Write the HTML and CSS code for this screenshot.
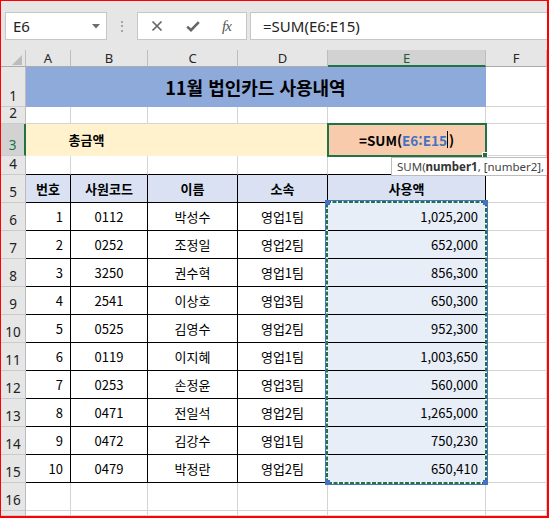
FILE: index.html
```html
<!DOCTYPE html>
<html lang="ko">
<head>
  <meta charset="UTF-8">
  <title>11월 법인카드 사용내역</title>
  <link rel="stylesheet" href="styles.css">
</head>
<body>
<div class="frame">
  <!-- 수식 입력줄 -->
  <div class="toolbar">
    <div class="namebox">
      <span>E6</span>
      <svg class="drop" width="8" height="5" viewBox="0 0 8 5"><polygon points="0,0 8,0 4,4.5" fill="#6b6b6b"/></svg>
    </div>
    <div class="grip"><i></i><i></i><i></i></div>
    <div class="fxbox">
      <svg width="12" height="12" viewBox="0 0 12 12"><path d="M1.5 1.5 L10.5 10.5 M10.5 1.5 L1.5 10.5" stroke="#666" stroke-width="1.7" fill="none"/></svg>
      <svg width="14" height="11" viewBox="0 0 14 11"><path d="M1.2 5.6 L5 9.2 L12.8 1.2" stroke="#666" stroke-width="2.6" fill="none"/></svg>
      <span class="fx">fx</span>
    </div>
    <div class="formula">=SUM(E6:E15)</div>
  </div>

  <!-- 시트 -->
  <div class="sheet">
    <div class="c ch corner"><svg width="10" height="10" viewBox="0 0 10 10"><polygon points="10,0 10,10 0,10" fill="#bcbcbc"/></svg></div>
    <div class="c ch">A</div>
    <div class="c ch">B</div>
    <div class="c ch">C</div>
    <div class="c ch">D</div>
    <div class="c ch sel">E</div>
    <div class="c ch">F</div>

    <div class="c rh">1</div>
    <div class="c title">11월 법인카드 사용내역</div>
    <div class="c"></div>

    <div class="c rh">2</div>
    <div class="c"></div><div class="c"></div><div class="c"></div><div class="c"></div><div class="c"></div><div class="c"></div>

    <div class="c rh sel">3</div>
    <div class="c fill-y total">총금액</div>
    <div class="c fill-y"></div>
    <div class="c fill-y"></div>
    <div class="c active"><b>=SUM(</b><b class="ref">E6:E15</b><span class="caret"></span><b>)</b><span class="fh"></span></div>
    <div class="c"></div>

    <div class="c rh">4</div>
    <div class="c tb"></div><div class="c tb"></div><div class="c tb"></div><div class="c tb"></div><div class="c tb"></div><div class="c"></div>

    <div class="c rh">5</div>
    <div class="c t hd">번호</div>
    <div class="c t hd">사원코드</div>
    <div class="c t hd">이름</div>
    <div class="c t hd">소속</div>
    <div class="c t hd">사용액</div>
    <div class="c"></div>

    <div class="c rh">6</div>
    <div class="c t num">1</div><div class="c t">0112</div><div class="c t">박성수</div><div class="c t">영업1팀</div><div class="c t num amt">1,025,200</div><div class="c"></div>
    <div class="c rh">7</div>
    <div class="c t num">2</div><div class="c t">0252</div><div class="c t">조정일</div><div class="c t">영업2팀</div><div class="c t num amt">652,000</div><div class="c"></div>
    <div class="c rh">8</div>
    <div class="c t num">3</div><div class="c t">3250</div><div class="c t">권수혁</div><div class="c t">영업1팀</div><div class="c t num amt">856,300</div><div class="c"></div>
    <div class="c rh">9</div>
    <div class="c t num">4</div><div class="c t">2541</div><div class="c t">이상호</div><div class="c t">영업3팀</div><div class="c t num amt">650,300</div><div class="c"></div>
    <div class="c rh">10</div>
    <div class="c t num">5</div><div class="c t">0525</div><div class="c t">김영수</div><div class="c t">영업2팀</div><div class="c t num amt">952,300</div><div class="c"></div>
    <div class="c rh">11</div>
    <div class="c t num">6</div><div class="c t">0119</div><div class="c t">이지혜</div><div class="c t">영업1팀</div><div class="c t num amt">1,003,650</div><div class="c"></div>
    <div class="c rh">12</div>
    <div class="c t num">7</div><div class="c t">0253</div><div class="c t">손정윤</div><div class="c t">영업3팀</div><div class="c t num amt">560,000</div><div class="c"></div>
    <div class="c rh">13</div>
    <div class="c t num">8</div><div class="c t">0471</div><div class="c t">전일석</div><div class="c t">영업2팀</div><div class="c t num amt">1,265,000</div><div class="c"></div>
    <div class="c rh">14</div>
    <div class="c t num">9</div><div class="c t">0472</div><div class="c t">김강수</div><div class="c t">영업1팀</div><div class="c t num amt">750,230</div><div class="c"></div>
    <div class="c rh">15</div>
    <div class="c t num">10</div><div class="c t">0479</div><div class="c t">박정란</div><div class="c t">영업2팀</div><div class="c t num amt">650,410</div><div class="c"></div>

    <div class="c rh">16</div>
    <div class="c"></div><div class="c"></div><div class="c"></div><div class="c"></div><div class="c"></div><div class="c"></div>
    <div class="c rh"></div>
    <div class="c"></div><div class="c"></div><div class="c"></div><div class="c"></div><div class="c"></div><div class="c"></div>

    <!-- E6:E15 참조 범위 (격자 영역 위에 겹침) -->
    <div class="range">
      <svg width="161" height="283" viewBox="0 0 161 283">
        <rect x="1" y="1" width="159" height="281" fill="none" stroke="#fff" stroke-width="2"/>
        <rect x="1" y="1" width="159" height="281" fill="none" stroke="#217346" stroke-width="2" stroke-dasharray="4 1.5"/>
      </svg>
      <span class="hdl tl"></span><span class="hdl tr"></span>
      <span class="hdl bl"></span><span class="hdl br"></span>
    </div>
  </div>

  <div class="tip">SUM(<b>number1</b>, [number2], ...)</div>
</div>
</body>
</html>
```

FILE: styles.css
```css
body {
  margin: 0;
  background: #fff;
}
.frame {
  width: 549px;
  height: 518px;
  box-sizing: border-box;
  border: 1px solid #f00;
  border-right-width: 2px;
  border-bottom-width: 2px;
  overflow: hidden;
  position: relative;
  background: #fff;
  font-family: "Noto Sans", "Noto Sans CJK KR", sans-serif;
}

/* 수식 입력줄 */
.toolbar {
  height: 49px;
  box-sizing: border-box;
  padding-top: 11px;
  background: #e6e6e6;
  display: flex;
  align-items: flex-start;
}
.namebox {
  margin-left: 4px;
  width: 102px;
  height: 28px;
  box-sizing: border-box;
  border: 1px solid #c6c6c6;
  background: #fff;
  display: flex;
  align-items: center;
  justify-content: space-between;
  padding: 0 6px 0 7px;
  font-size: 15px;
  color: #222;
}
.grip {
  margin-left: 14px;
  height: 28px;
  display: flex;
  flex-direction: column;
  justify-content: center;
  gap: 2.5px;
}
.grip i {
  display: block;
  width: 2px;
  height: 2px;
  background: #a6a6a6;
}
.fxbox {
  margin-left: 14px;
  width: 110px;
  height: 28px;
  box-sizing: border-box;
  border: 1px solid #c6c6c6;
  background: #fff;
  display: flex;
  align-items: center;
  padding-left: 13px;
  gap: 23px;
}
.fx {
  font-family: "Liberation Serif", serif;
  font-style: italic;
  font-size: 15px;
  color: #555;
  letter-spacing: -1px;
  margin-left: -1px;
}
.formula {
  margin-left: 3px;
  flex: 1;
  height: 28px;
  box-sizing: border-box;
  border: 1px solid #c6c6c6;
  border-right: none;
  background: #fff;
  display: flex;
  align-items: center;
  padding-left: 12px;
  font-size: 15px;
  color: #222;
}

/* 시트 격자 */
.sheet {
  position: relative;
  display: grid;
  grid-template-columns: 25px 45px 77px 90px 90px 158px 1fr;
  grid-template-rows: 17px 40px 17px 32px 19px repeat(12, 28px) 1fr;
  height: 466px;
}
.c {
  box-sizing: border-box;
  border-right: 1px solid #d4d4d4;
  border-bottom: 1px solid #d4d4d4;
  display: flex;
  align-items: center;
  justify-content: center;
  font: 13px "Noto Sans CJK KR", sans-serif;
  color: #000;
  white-space: nowrap;
  min-width: 0;
}
.ch {
  background: #e6e6e6;
  border-right-color: #bdbdbd;
  border-bottom-color: #ababab;
  font: 13px "Noto Sans", sans-serif;
  color: #262626;
}
.ch.sel {
  background: #d2d2d2;
  border-bottom: 2px solid #217346;
  color: #1e5b38;
}
.corner {
  justify-content: flex-end;
  align-items: flex-end;
  padding: 0 3px 1px 0;
}
.rh {
  background: #e6e6e6;
  border-right-color: #bdbdbd;
  border-bottom-color: #cbcbcb;
  align-items: flex-end;
  padding-bottom: 1px;
  font: 13.5px "Noto Sans", sans-serif;
  color: #222;
}
.rh.sel {
  background: #d2d2d2;
  border-right: 2px solid #217346;
  color: #217346;
}
.title {
  grid-column: 2 / 7;
  background: #8eaadb;
  border-color: #8eaadb;
  font-weight: bold;
  font-size: 18px;
}
.fill-y {
  background: #fff2cc;
  border-color: #fff2cc;
}
.total {
  grid-column: 2 / 4;
  font-weight: bold;
}
.active {
  position: relative;
  z-index: 3;
  background: #f8cbad;
  outline: 2px solid #217346;
  outline-offset: -1px;
  font-size: 13.5px;
}
.active .ref {
  color: #4472c4;
}
.caret {
  width: 1px;
  height: 17px;
  background: #000;
  margin: 0 1px 0 0;
}
.fh {
  position: absolute;
  right: -3px;
  bottom: -3px;
  width: 4px;
  height: 4px;
  background: #217346;
  border: 1px solid #fff;
}
.tb {
  border-bottom-color: #000;
}
.t {
  border-right-color: #000;
  border-bottom-color: #000;
}
.hd {
  background: #d9e1f2;
  font-weight: bold;
}
.num {
  justify-content: flex-end;
  padding-right: 7px;
}
.amt {
  background: #e8eef8;
}

/* 참조 범위 표시 */
.range {
  position: absolute;
  grid-column: 6 / 7;
  grid-row: 7 / 17;
  top: -2px;
  left: -2px;
  right: -1px;
  bottom: -1px;
  z-index: 2;
  box-shadow: 0 0 0 1px #4472c4;
  pointer-events: none;
}
.range svg {
  display: block;
}
.hdl {
  position: absolute;
  width: 5px;
  height: 5px;
  background: #4472c4;
}
.tl { left: -1px; top: -1px; }
.tr { right: -1px; top: -1px; }
.bl { left: -1px; bottom: -1px; }
.br { right: -1px; bottom: -1px; }

/* 함수 도움말 */
.tip {
  position: absolute;
  left: 390px;
  top: 156px;
  height: 19px;
  box-sizing: border-box;
  border: 1px solid #bcbcbc;
  background: #fff;
  padding: 0 5px;
  display: flex;
  align-items: center;
  font-size: 11.5px;
  color: #444;
  white-space: nowrap;
  z-index: 4;
}
.tip b {
  color: #333;
}
```
